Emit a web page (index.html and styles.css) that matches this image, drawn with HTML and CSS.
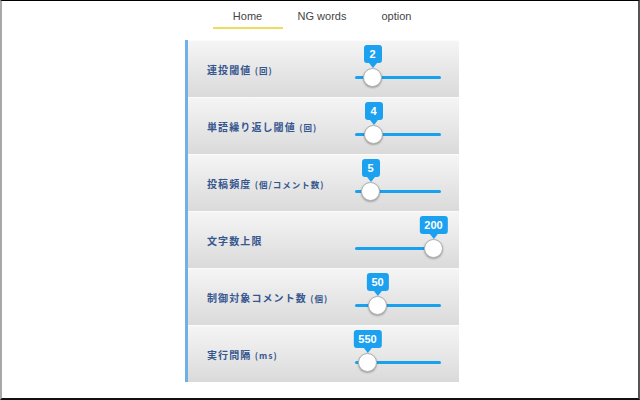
FILE: index.html
```html
<!DOCTYPE html>
<html lang="ja">
<head>
<meta charset="utf-8">
<title>Settings</title>
<link rel="stylesheet" href="styles.css">
</head>
<body>
<div class="frame">
  <nav class="tabs">
    <a class="tab active">Home</a>
    <a class="tab">NG words</a>
    <a class="tab">option</a>
  </nav>
  <section class="panel">
    <div class="row">
      <div class="label">連投閾値 <span class="unit">(回)</span></div>
      <div class="slider"><div class="track"><div class="knob" style="left:8px"><span class="tip">2</span><span class="thumb"></span></div></div></div>
    </div>
    <div class="row">
      <div class="label">単語繰り返し閾値 <span class="unit">(回)</span></div>
      <div class="slider"><div class="track"><div class="knob" style="left:9px"><span class="tip">4</span><span class="thumb"></span></div></div></div>
    </div>
    <div class="row">
      <div class="label">投稿頻度 <span class="unit">(個/コメント数)</span></div>
      <div class="slider"><div class="track"><div class="knob" style="left:6px"><span class="tip">5</span><span class="thumb"></span></div></div></div>
    </div>
    <div class="row">
      <div class="label">文字数上限</div>
      <div class="slider"><div class="track"><div class="knob" style="left:69px"><span class="tip">200</span><span class="thumb"></span></div></div></div>
    </div>
    <div class="row">
      <div class="label">制御対象コメント数 <span class="unit">(個)</span></div>
      <div class="slider"><div class="track"><div class="knob" style="left:13px"><span class="tip">50</span><span class="thumb"></span></div></div></div>
    </div>
    <div class="row">
      <div class="label">実行間隔 <span class="unit">(ms)</span></div>
      <div class="slider"><div class="track"><div class="knob" style="left:3px"><span class="tip">550</span><span class="thumb"></span></div></div></div>
    </div>
  </section>
</div>
</body>
</html>
```

FILE: styles.css
```css
html, body {
  margin: 0;
  padding: 0;
  background: #fff;
}

.frame {
  width: 640px;
  height: 400px;
  box-sizing: border-box;
  border-top: 1px solid #000;
  border-left: 2px solid #a8a8a8;
  border-right: 2px solid #555;
  border-bottom: 2px solid #111;
  padding-left: 4px;
  font-family: "Liberation Sans", "Noto Sans CJK JP", sans-serif;
}

.tabs {
  display: flex;
  justify-content: center;
  gap: 4.5px;
}

.tab {
  width: 70px;
  text-align: center;
  font-size: 11px;
  line-height: 14px;
  color: #444;
  padding-top: 8px;
  padding-bottom: 4px;
  border-bottom: 2px solid transparent;
}

.tab.active {
  border-bottom-color: #eedc5a;
}

.panel {
  width: 274px;
  margin: 11px auto 0;
  box-sizing: border-box;
  border-left: 3px solid #6fb0e8;
}

.row {
  display: flex;
  align-items: center;
  height: 57px;
  box-sizing: border-box;
  border-top: 1px solid #fbfbfb;
  background: linear-gradient(#f5f5f5, #dadada);
  padding-left: 19px;
  padding-right: 18px;
}

.label {
  flex: 1;
  font-family: "Noto Sans CJK JP", sans-serif;
  font-weight: 700;
  font-size: 10px;
  letter-spacing: 1.1px;
  color: #36568e;
  white-space: nowrap;
}

.unit {
  font-size: 8.5px;
  letter-spacing: 1px;
}

.slider {
  width: 86px;
  align-self: stretch;
}

.track {
  position: relative;
  margin-top: 35px;
  height: 3px;
  border-radius: 2px;
  background: #19a1ee;
}

.knob {
  position: absolute;
  top: -8px;
  width: 19px;
  height: 19px;
}

.thumb {
  position: absolute;
  left: 0;
  top: 0;
  width: 19px;
  height: 19px;
  box-sizing: border-box;
  border-radius: 50%;
  background: #fff;
  border: 1px solid #b0b0b0;
  box-shadow: 0 1px 2px rgba(0, 0, 0, 0.3);
}

.tip {
  position: absolute;
  left: 50%;
  bottom: 24px;
  transform: translateX(-50%);
  min-width: 18px;
  height: 18px;
  box-sizing: border-box;
  padding: 0 5px;
  border-radius: 3px;
  background: #1ba1ef;
  color: #fff;
  font-family: "Liberation Sans", sans-serif;
  font-weight: 700;
  font-size: 11px;
  line-height: 18px;
  text-align: center;
}

.tip::after {
  content: "";
  position: absolute;
  left: 50%;
  top: 100%;
  margin-left: -4px;
  border-style: solid;
  border-width: 5px 4px 0 4px;
  border-color: #1ba1ef transparent transparent transparent;
}
```
